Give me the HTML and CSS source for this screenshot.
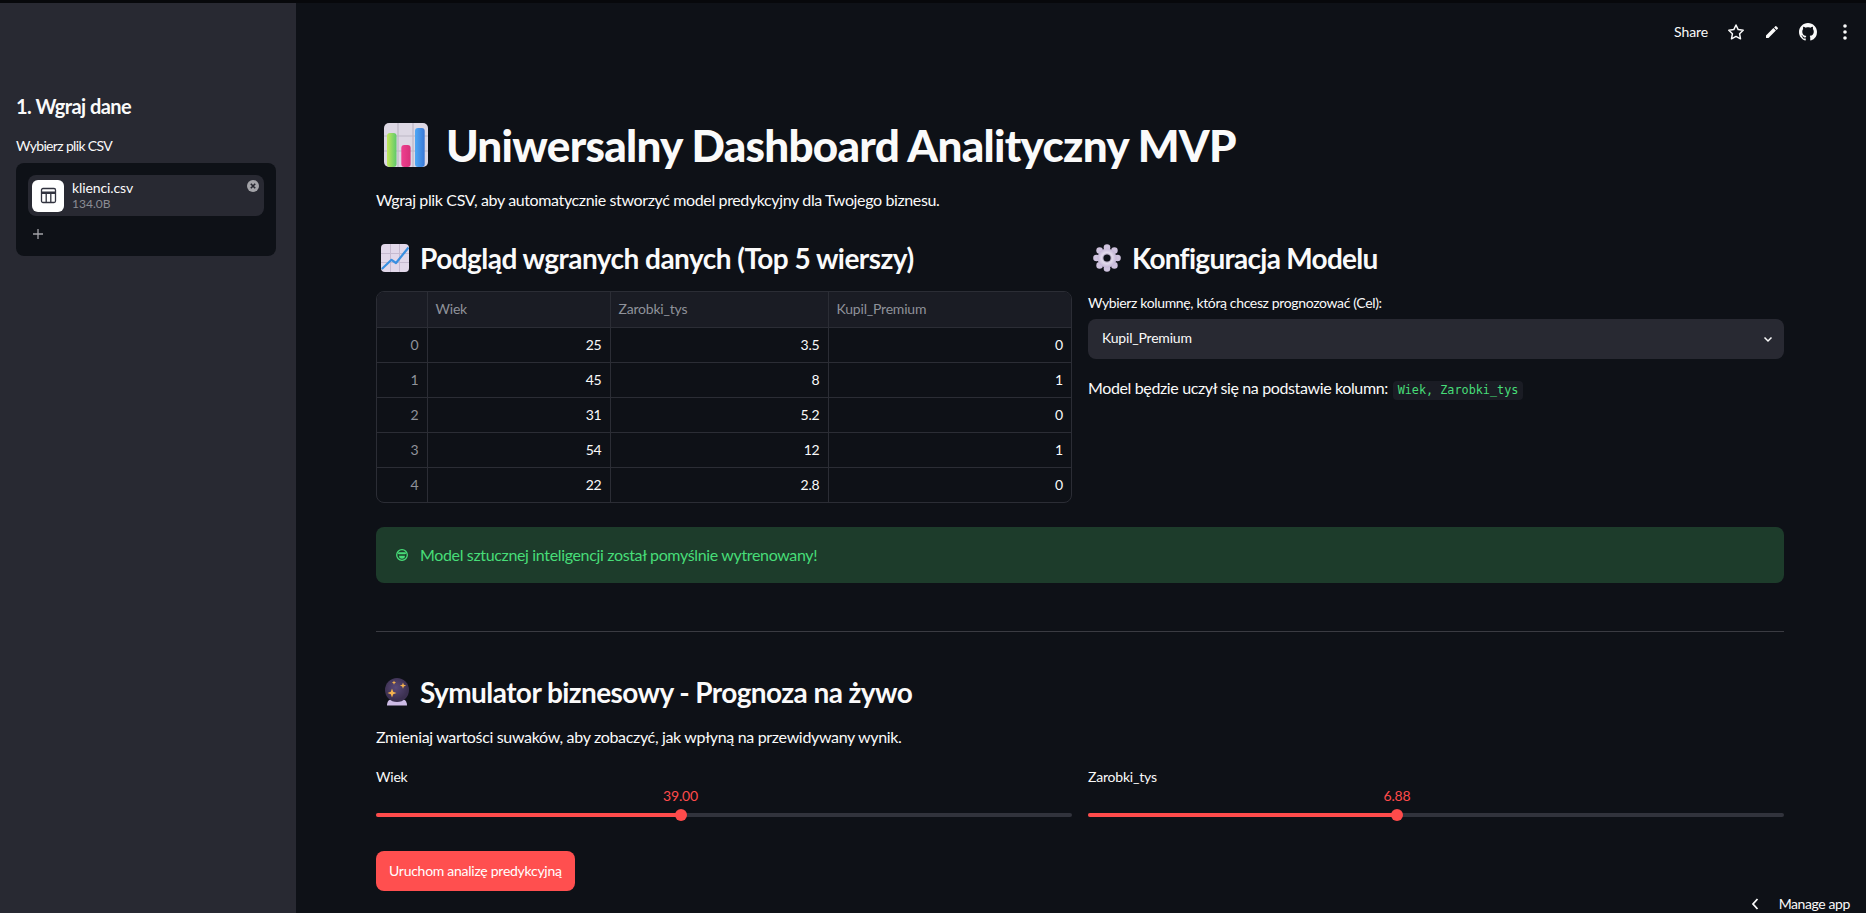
FILE: index.html
```html
<!DOCTYPE html>
<html lang="pl">
<head>
<meta charset="UTF-8">
<meta name="viewport" content="width=device-width, initial-scale=1.0">
<title>Uniwersalny Dashboard Analityczny MVP</title>
<link rel="stylesheet" href="styles.css">
</head>
<body>
    <div class="top-strip"></div>
    <div class="app">
        <aside class="sidebar">
            <h3 class="side-title">1. Wgraj dane</h3>
            <div class="side-label">Wybierz plik CSV</div>
            <div class="uploader">
                <div class="file-row">
                    <div class="file-icon">
                        <svg width="17" height="17" viewBox="0 0 17 17" fill="none" stroke="#31333f" stroke-width="1.3"><rect x="1.5" y="1.5" width="14" height="14" rx="1.5"/><path d="M1.5 5.200h14M1.5 6.400h14M6.200 6.400v9.100M10.800 6.400v9.100"/></svg>
                    </div>
                    <div class="file-info">
                        <div class="file-name">klienci.csv</div>
                        <div class="file-size">134.0B</div>
                    </div>
                    <svg class="file-remove" width="12" height="12" viewBox="0 0 12 12"><circle cx="6" cy="6" r="6" fill="#a3a3a8"/><path d="M3.8 3.8l4.4 4.4M8.2 3.8l-4.4 4.4" stroke="#262730" stroke-width="1.6"/></svg>
                </div>
                <svg class="file-add" width="12" height="12" viewBox="0 0 12 12"><path d="M6 1v10M1 6h10" stroke="#a3a3a8" stroke-width="1.3"/></svg>
            </div>
        </aside>

        <main class="main">
            <header class="toolbar">
                <span class="share">Share</span>
                <svg class="tool-icon" width="18" height="18" viewBox="0 0 18 18" fill="none" stroke="#fafafa" stroke-width="1.5" stroke-linejoin="round"><path d="M9 2l2.2 4.6 5 .7-3.6 3.5.9 5L9 13.4l-4.5 2.4.9-5L1.8 7.3l5-.7z"/></svg>
                <svg class="tool-icon" width="18" height="18" viewBox="0 0 18 18" fill="#fafafa"><path d="M3 12.5V15h2.500l7.400-7.400-2.500-2.500zM14.800 5.700a.7.7 0 000-1l-1.500-1.500a.7.7 0 00-1 0l-1.200 1.200 2.500 2.500z"/></svg>
                <svg class="tool-icon" width="18" height="18" viewBox="0 0 16 16" fill="#fafafa"><path d="M8 0C3.58 0 0 3.58 0 8c0 3.54 2.29 6.53 5.47 7.59.4.07.55-.17.55-.38 0-.19-.01-.82-.01-1.49-2.01.37-2.53-.49-2.69-.94-.09-.23-.48-.94-.82-1.13-.28-.15-.68-.52-.01-.53.63-.01 1.08.58 1.23.82.72 1.21 1.87.87 2.33.66.07-.52.28-.87.51-1.07-1.78-.2-3.64-.89-3.64-3.95 0-.87.31-1.59.82-2.15-.08-.2-.36-1.02.08-2.12 0 0 .67-.21 2.2.82.64-.18 1.32-.27 2-.27.68 0 1.36.09 2 .27 1.53-1.04 2.2-.82 2.2-.82.44 1.1.16 1.92.08 2.12.51.56.82 1.27.82 2.15 0 3.07-1.87 3.75-3.65 3.95.29.25.54.73.54 1.48 0 1.07-.01 1.93-.01 2.2 0 .21.15.46.55.38A8.013 8.013 0 0016 8c0-4.420-3.58-8-8-8z"/></svg>
                <svg class="tool-dots" width="6" height="18" viewBox="0 0 6 18" fill="#fafafa"><circle cx="3" cy="3" r="1.800"/><circle cx="3" cy="9" r="1.800"/><circle cx="3" cy="15" r="1.800"/></svg>
            </header>

            <div class="content">
                <h1 class="page-title">
                    <svg class="emoji-big" width="44" height="44" viewBox="0 0 44 44">
                        <defs>
                            <linearGradient id="barG" x1="0" y1="0" x2="1" y2="0"><stop offset="0" stop-color="#c2e85c"/><stop offset="1" stop-color="#5fc96b"/></linearGradient>
                            <linearGradient id="barP" x1="0" y1="0" x2="1" y2="0"><stop offset="0" stop-color="#ee3f8f"/><stop offset="1" stop-color="#d8317a"/></linearGradient>
                            <linearGradient id="barB" x1="0" y1="0" x2="1" y2="0"><stop offset="0" stop-color="#4fa8f5"/><stop offset="1" stop-color="#3a78d6"/></linearGradient>
                        </defs>
                        <rect width="44" height="44" rx="5" fill="#ddd8e4"/>
                        <path d="M14 0v44M29 0v44M0 13h44M0 28h44" stroke="#bdb7c6" stroke-width="1.200"/>
                        <rect x="3" y="10" width="9.500" height="34" rx="3" fill="url(#barG)"/>
                        <rect x="17.300" y="22" width="9.300" height="22" rx="3" fill="url(#barP)"/>
                        <rect x="31" y="5" width="9.700" height="39" rx="3" fill="url(#barB)"/>
                    </svg>
                    Uniwersalny Dashboard Analityczny MVP
                </h1>
                <p class="lead">Wgraj plik CSV, aby automatycznie stworzyć model predykcyjny dla Twojego biznesu.</p>

                <div class="cols">
                    <section class="col">
                        <h2 class="section-title">
                            <svg class="emoji" width="28" height="28" viewBox="0 0 28 28">
                                <rect width="28" height="28" rx="4" fill="#e2d8ea"/>
                                <path d="M9.500 0v28M18.500 0v28M0 9.500h28M0 18.500h28" stroke="#c6bad0" stroke-width="1"/>
                                <path d="M.8 25L10.500 15.800 15 19 27.500 3.500" fill="none" stroke="#3a8fe0" stroke-width="2.200" stroke-linejoin="round"/>
                            </svg>
                            Podgląd wgranych danych (Top 5 wierszy)
                        </h2>
                        <div class="df-wrap">
                            <table class="df">
                                <colgroup>
                                    <col class="c-index"><col class="c-wiek"><col class="c-zarobki"><col class="c-kupil">
                                </colgroup>
                                <thead>
                                    <tr><th></th><th>Wiek</th><th>Zarobki_tys</th><th>Kupil_Premium</th></tr>
                                </thead>
                                <tbody>
                                    <tr><td class="idx">0</td><td>25</td><td>3.5</td><td>0</td></tr>
                                    <tr><td class="idx">1</td><td>45</td><td>8</td><td>1</td></tr>
                                    <tr><td class="idx">2</td><td>31</td><td>5.2</td><td>0</td></tr>
                                    <tr><td class="idx">3</td><td>54</td><td>12</td><td>1</td></tr>
                                    <tr><td class="idx">4</td><td>22</td><td>2.8</td><td>0</td></tr>
                                </tbody>
                            </table>
                        </div>
                    </section>

                    <section class="col">
                        <h2 class="section-title config-title">
                            <svg class="emoji" width="28" height="28" viewBox="0 0 28 28">
                                <defs><radialGradient id="gearFill"><stop offset=".3" stop-color="#8f84a0"/><stop offset=".55" stop-color="#e3dcec"/><stop offset="1" stop-color="#c4b6d6"/></radialGradient></defs>
                                <g fill="#cfc3de">
                                    <circle cx="14" cy="3.500" r="3.300"/><circle cx="14" cy="24.500" r="3.300"/>
                                    <circle cx="3.500" cy="14" r="3.300"/><circle cx="24.500" cy="14" r="3.300"/>
                                    <circle cx="6.600" cy="6.600" r="3.300"/><circle cx="21.400" cy="6.600" r="3.300"/>
                                    <circle cx="6.600" cy="21.400" r="3.300"/><circle cx="21.400" cy="21.400" r="3.300"/>
                                </g>
                                <circle cx="14" cy="14" r="9.500" fill="url(#gearFill)"/>
                                <circle cx="14" cy="14" r="3.500" fill="#0e1117"/>
                            </svg>
                            Konfiguracja Modelu
                        </h2>
                        <div class="field-label">Wybierz kolumnę, którą chcesz prognozować (Cel):</div>
                        <div class="select">
                            <span>Kupil_Premium</span>
                            <svg width="12" height="12" viewBox="0 0 12 12" fill="none" stroke="#fafafa" stroke-width="1.500"><path d="M2.500 4.500L6 8l3.500-3.500"/></svg>
                        </div>
                        <p class="model-note">Model będzie uczył się na podstawie kolumn: <code class="code">Wiek, Zarobki_tys</code></p>
                    </section>
                </div>

                <div class="success">
                    <svg width="12" height="12" viewBox="0 0 12 12"><circle cx="6" cy="6" r="5.300" fill="none" stroke="#47dd78" stroke-width="1.300"/><rect x="2" y="3.200" width="8" height="2" rx="1" fill="#47dd78"/><path d="M3 6.800h6a3 3 0 01-6 0z" fill="#47dd78"/></svg>
                    <span>Model sztucznej inteligencji został pomyślnie wytrenowany!</span>
                </div>

                <hr class="divider">

                <h2 class="section-title sim-title">
                    <svg class="emoji" width="28" height="28" viewBox="0 0 28 28">
                        <defs><radialGradient id="ball" cx=".45" cy=".4"><stop offset="0" stop-color="#5a4a78"/><stop offset="1" stop-color="#3b3050"/></radialGradient></defs>
                        <path d="M4 27.500c0-4 2-6 4-6h12c2 0 4 2 4 6z" fill="#cdbce6"/>
                        <circle cx="14" cy="12" r="12" fill="url(#ball)"/>
                        <path d="M9 10.500l1.200 3.300 3.300 1.200-3.300 1.200L9 19.500l-1.200-3.300-3.300-1.200 3.300-1.200zM20 4.500l.8 2.300 2.300.8-2.300.8-.8 2.300-.8-2.300-2.300-.8 2.300-.8zM11 2.500l.6 1.500 1.500.6-1.500.6-.6 1.500-.6-1.500-1.500-.6 1.500-.6z" fill="#f4b24e"/>
                    </svg>
                    Symulator biznesowy - Prognoza na żywo
                </h2>
                <p class="sim-lead">Zmieniaj wartości suwaków, aby zobaczyć, jak wpłyną na przewidywany wynik.</p>

                <div class="cols sliders">
                    <div class="col slider">
                        <div class="slider-label">Wiek</div>
                        <div class="track">
                            <div class="fill" style="width: 43.75%">
                                <span class="thumb"></span>
                                <span class="value">39.00</span>
                            </div>
                        </div>
                    </div>
                    <div class="col slider">
                        <div class="slider-label">Zarobki_tys</div>
                        <div class="track">
                            <div class="fill" style="width: 44.4%">
                                <span class="thumb"></span>
                                <span class="value">6.88</span>
                            </div>
                        </div>
                    </div>
                </div>

                <button class="primary" type="button">Uruchom analizę predykcyjną</button>
            </div>
        </main>
    </div>

    <div class="manage">
        <svg width="10" height="14" viewBox="0 0 10 14" fill="none" stroke="#fafafa" stroke-width="1.800"><path d="M7.500 2L3 7l4.500 5"/></svg>
        <span>Manage app</span>
    </div>
</body>
</html>
```
FILE: styles.css
```css
* {
    box-sizing: border-box;
}
html,
body {
    height: 100%;
    margin: 0;
}
body {
    background: #0e1117;
    color: #fafafa;
    font: 400 16px/24px "Lato", "Noto Sans", sans-serif;
    overflow: hidden;
    display: flex;
    flex-direction: column;
}
h1,
h2,
h3,
p {
    margin: 0;
}

.top-strip {
    height: 3px;
    background: #07080b;
    flex: none;
}
.app {
    display: flex;
    flex: 1;
    min-height: 0;
}

/* sidebar */
.sidebar {
    width: 296px;
    flex: none;
    background: #282932;
    padding: 91px 20px 0 16px;
}
.side-title {
    font-size: 20px;
    line-height: 24px;
    font-weight: 700;
    letter-spacing: -0.55px;
}
.side-label {
    font-size: 14px;
    line-height: 20px;
    margin-top: 18px;
    letter-spacing: -0.65px;
}
.uploader {
    margin-top: 7px;
    height: 93px;
    background: #0e1117;
    border-radius: 8px;
    padding: 12px;
}
.file-row {
    display: flex;
    align-items: center;
    gap: 8px;
    height: 41px;
    padding: 0 5px 0 4px;
    background: #282932;
    border-radius: 8px;
}
.file-icon {
    width: 32px;
    height: 32px;
    background: #fff;
    border-radius: 6px;
    display: flex;
    align-items: center;
    justify-content: center;
    flex: none;
}
.file-info {
    flex: 1;
}
.file-name {
    font-size: 14px;
    line-height: 17px;
    letter-spacing: -0.1px;
}
.file-size {
    font-size: 12px;
    line-height: 16px;
    color: #8b8d94;
}
.file-remove {
    align-self: flex-start;
    margin: 5px 0 0;
}
.file-add {
    display: block;
    margin: 12px 0 0 4px;
}

/* main */
.main {
    flex: 1;
    min-width: 0;
}
.toolbar {
    height: 58px;
    display: flex;
    align-items: center;
    justify-content: flex-end;
    padding-right: 18px;
}
.share {
    font-size: 14px;
    margin-right: 19px;
    letter-spacing: -0.1px;
}
.tool-icon {
    margin-right: 18px;
}
.tool-dots {
    margin-left: 7px;
}
.content {
    padding: 54px 82px 0 80px;
}
.page-title {
    display: flex;
    align-items: center;
    gap: 18px;
    height: 60px;
    padding-left: 8px;
    font-size: 44px;
    line-height: 60px;
    font-weight: 900;
    letter-spacing: -0.72px;
}
.lead {
    margin-top: 13px;
    letter-spacing: -0.37px;
}
.cols {
    display: grid;
    grid-template-columns: 1fr 1fr;
    gap: 16px;
}
.cols > .col {
    min-width: 0;
}
.section-title {
    display: flex;
    align-items: center;
    gap: 11px;
    height: 40px;
    margin-top: 26px;
    padding-left: 5px;
    font-size: 28px;
    line-height: 40px;
    font-weight: 700;
    letter-spacing: -0.53px;
}
.config-title {
    letter-spacing: -0.72px;
}

/* dataframe */
.df-wrap {
    margin-top: 13px;
    border: 1px solid #2b2d35;
    border-radius: 8px;
    overflow: hidden;
}
.df {
    width: 100%;
    table-layout: fixed;
    border-collapse: collapse;
    font-size: 14px;
    letter-spacing: -0.2px;
}
.c-index {
    width: 50px;
}
.c-wiek {
    width: 183px;
}
.c-zarobki {
    width: 218px;
}
.df th,
.df td {
    height: 35px;
    padding: 0 8px;
    border: 1px solid #2b2d35;
}
.df tr > :first-child {
    border-left: 0;
}
.df tr > :last-child {
    border-right: 0;
}
.df thead th {
    border-top: 0;
}
.df tbody tr:last-child td {
    border-bottom: 0;
}
.df th {
    background: #1a1c24;
    color: #8f929a;
    font-weight: 400;
    text-align: left;
}
.df td {
    text-align: right;
}
.df .idx {
    color: #8f929a;
}

/* config column */
.field-label {
    margin-top: 15px;
    margin-bottom: 6px;
    font-size: 14px;
    line-height: 20px;
    letter-spacing: -0.35px;
}
.select {
    height: 40px;
    background: #282932;
    border-radius: 8px;
    padding: 0 10px 3px 14px;
    display: flex;
    align-items: center;
    justify-content: space-between;
    font-size: 14px;
    letter-spacing: -0.2px;
}
.select svg {
    margin-top: 3px;
}
.model-note {
    margin-top: 17px;
    letter-spacing: -0.37px;
}
.code {
    display: inline-block;
    margin-left: 1px;
    padding: 0 5px;
    font: 11.8px/19px "DejaVu Sans Mono", monospace;
    letter-spacing: 0;
    color: #47dd78;
    background: #1a1c24;
    border-radius: 4px;
}

/* success */
.success {
    margin-top: 24px;
    height: 56px;
    padding: 0 20px 1px;
    background: #1d3c2b;
    border-radius: 8px;
    color: #47dd78;
    letter-spacing: -0.35px;
    display: flex;
    align-items: center;
    gap: 12px;
}
.divider {
    margin: 48px 0 0;
    border: 0;
    border-bottom: 1px solid #3a3b42;
}
.sim-title {
    margin-top: 40px;
    padding-left: 7px;
    gap: 9px;
    letter-spacing: -0.58px;
}
.sim-lead {
    margin-top: 13px;
    letter-spacing: -0.33px;
}

/* sliders */
.sliders {
    margin-top: 18px;
}
.slider-label {
    font-size: 14px;
    line-height: 20px;
    letter-spacing: -0.2px;
}
.track {
    margin-top: 26px;
    height: 4px;
    border-radius: 2px;
    background: #31333c;
}
.fill {
    position: relative;
    height: 4px;
    border-radius: 2px;
    background: #ff4b4b;
}
.thumb {
    position: absolute;
    right: -6px;
    top: -4px;
    width: 12px;
    height: 12px;
    border-radius: 50%;
    background: #ff4b4b;
}
.value {
    position: absolute;
    right: 0;
    top: -27px;
    transform: translateX(50%);
    font-size: 14px;
    line-height: 20px;
    letter-spacing: -0.2px;
    color: #ff4b4b;
}
.primary {
    margin-top: 34px;
    height: 40px;
    padding: 0 13px;
    border: 0;
    border-radius: 8px;
    background: #ff4f4f;
    color: #fff;
    font: 400 14px/20px "Lato", "Noto Sans", sans-serif;
    letter-spacing: -0.27px;
}

/* floating manage button */
.manage {
    position: absolute;
    right: 16px;
    bottom: 0;
    display: flex;
    align-items: center;
    gap: 19px;
    font-size: 14px;
    line-height: 18px;
    letter-spacing: -0.4px;
}
```
